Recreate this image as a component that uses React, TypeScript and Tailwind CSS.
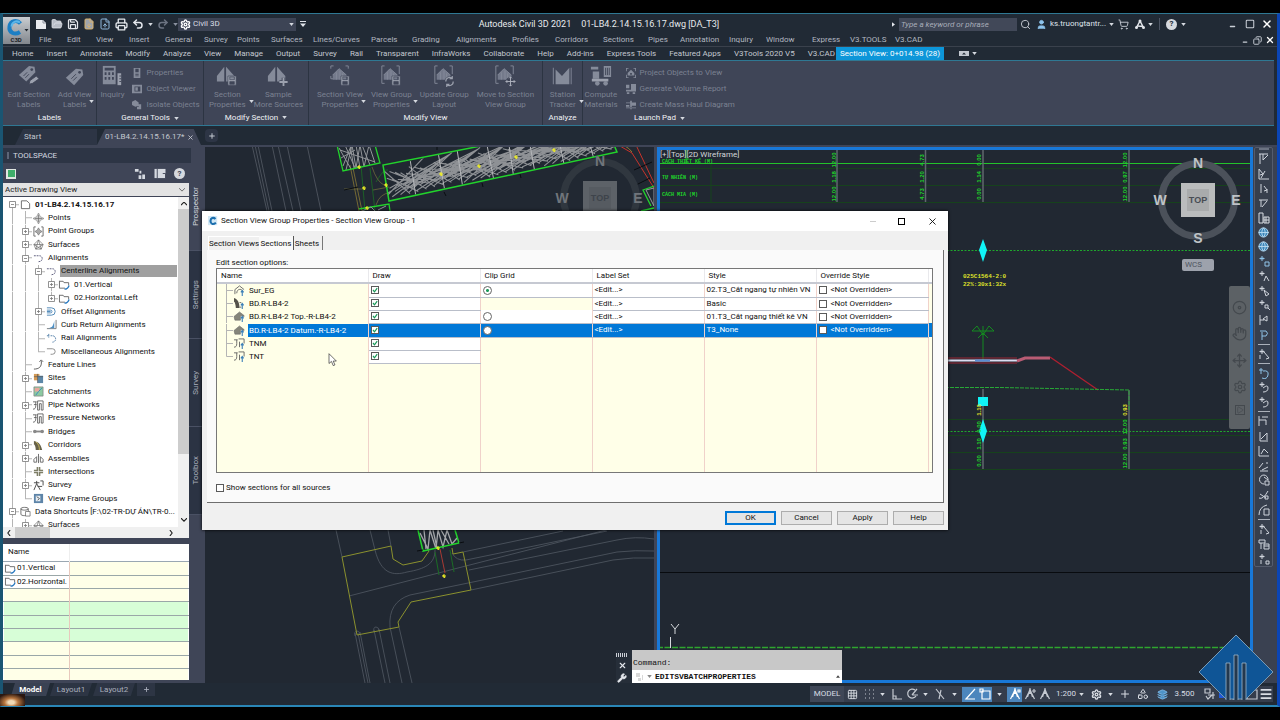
import React from "react";
import {
  FilePlus, FolderOpen, Save, FileDown, FileUp, Printer, Undo2, Redo2, Settings, Search, User, ShoppingCart,
  Wrench, X, Plus, Minus, Grid3x3, Menu, Layers, Shapes, Hand, Move, Disc, Play, Copy, Square, Globe,
} from "lucide-react";

const Caret = ({ className = "text-[#d5d9e0]" }: { className?: string }) => (
  <svg className={"h-[3px] w-[5px] shrink-0 " + className} viewBox="0 0 6 4"><path d="M0 0h6L3 4z" fill="currentColor" /></svg>
);

const menus = ["File", "Edit", "View", "Insert", "General", "Survey", "Points", "Surfaces", "Lines/Curves", "Parcels", "Grading", "Alignments", "Profiles", "Corridors", "Sections", "Pipes", "Annotation", "Inquiry", "Window", "Express", "V3.TOOLS", "V3.CAD"];
const tabs = ["Home", "Insert", "Annotate", "Modify", "Analyze", "View", "Manage", "Output", "Survey", "Rail", "Transparent", "InfraWorks", "Collaborate", "Help", "Add-ins", "Express Tools", "Featured Apps", "V3Tools 2020 V5", "V3.CAD"];

function TitleBar() {
  return (
    <header className="flex bg-[#212a35] text-[#c9ced6]">
      <button aria-label="Application menu" className="mt-[3px] flex h-[27px] w-[27px] shrink-0 items-center justify-center bg-gradient-to-b from-[#c9cdd1] to-[#82878d]">
        <svg viewBox="0 0 27 27" className="h-full w-full">
          <path d="M17.500 6.500C14 2.500 7.500 3.500 6.500 9.500c-1 6 5 9 10.500 5.500" fill="none" stroke="#1c7fc4" strokeWidth="4" />
          <path d="M17 5.500C13 3 9 5 8.500 9.500" fill="none" stroke="#5db7ea" strokeWidth="2" />
          <path d="M21.500 12h4l-2 2.500z" fill="#20262e" />
          <text x="7.500" y="25" fontSize="6" fontWeight="700" fill="#1b1f26" fontFamily="Roboto">C3D</text>
        </svg>
      </button>
      <div className="min-w-0 flex-1">
        <div className="flex h-5 items-center">
          <div className="flex items-center gap-1 pl-[5px] text-[#e4e7ec]">
            <button aria-label="New">
              <svg viewBox="0 0 12 12" className="h-3 w-3"><path d="M1 2h7l3 3v6H1z" fill="#e9ebef" /><path d="M8 2v3h3" fill="none" stroke="#8d939e" /></svg>
            </button>
            <button aria-label="Open"><FolderOpen size={12} fill="#b9bec7" strokeWidth={1.500} /></button>
            <button aria-label="Save"><Save size={12} strokeWidth={2.500} /></button>
            <button aria-label="Save as"><FileDown size={12} fill="#9fa4ac" className="text-[#d9b26c]" /></button>
            <button aria-label="Open from mobile"><FileUp size={12} className="text-[#8fb7dc]" /></button>
            <button aria-label="Plot"><Printer size={13} strokeWidth={2.500} /></button>
            <button aria-label="Undo"><Undo2 size={12} strokeWidth={3} /></button>
            <Caret />
            <button aria-label="Redo" className="text-[#6c7482]"><Redo2 size={12} strokeWidth={3} /></button>
            <Caret className="text-[#8a91a0]" />
          </div>
          <label className="flex h-[13px] w-[118px] items-center gap-[2px] bg-[#3d4455] px-[2px]">
            <Settings size={11} strokeWidth={3} className="text-white" />
            <select aria-label="Workspace" className="flex-1 appearance-none bg-transparent text-[8px] text-[#d9dde4] outline-none"><option>Civil 3D</option></select>
            <Caret />
          </label>
          <button aria-label="Customize" className="ml-1"><svg viewBox="0 0 6 6" className="h-[6px] w-[6px]"><path d="M0 0h6v1H0zM0 2.500h6L3 6z" fill="#dfe3e9" /></svg></button>
          <h1 className="flex flex-1 justify-center gap-[10px] text-[9px] text-[#e8eaee] max-sm:hidden"><span>Autodesk Civil 3D 2021</span><span>01-LB4.2.14.15.16.17.dwg [DA_T3]</span></h1>
          <svg viewBox="0 0 4 6" className="mr-1 h-[5px] w-[3px]"><path d="M0 0v6l4-3z" fill="#e4e7ec" /></svg>
          <input aria-label="Search" placeholder="Type a keyword or phrase" className="h-[13px] w-[118px] bg-[#414858] pl-[2px] text-[8px] italic outline-none placeholder:text-[#a8adb8]" />
          <button aria-label="Search" className="ml-[3px]"><Search size={11} /></button>
          <button className="ml-[5px] flex items-center gap-[3px] text-[8px] text-[#dfe3e9]"><User size={11} fill="#8ec5ee" className="text-[#8ec5ee]" />ks.truongtantr...<Caret /></button>
          <button aria-label="Store" className="ml-1"><ShoppingCart size={11} /></button>
          <button aria-label="Autodesk apps" className="ml-[6px] flex items-center gap-[3px]">
            <svg viewBox="0 0 10 10" className="h-[10px] w-[10px]"><path d="M1.500 8.500L5 2l3.500 6.500M3 7l5 .5" fill="none" stroke="#e4e7ec" strokeWidth="1.500" /><circle cx="5" cy="2" r="1.500" fill="#e4e7ec" /><circle cx="1.500" cy="8.500" r="1.500" fill="#e4e7ec" /><circle cx="8.500" cy="8.500" r="1.500" fill="#e4e7ec" /></svg>
            <Caret />
          </button>
          <i className="ml-[6px] h-3 w-px bg-[#4d5564]" />
          <button aria-label="Help" className="ml-[6px] flex items-center gap-1"><b className="flex h-[11px] w-[11px] items-center justify-center rounded-full bg-[#d6d9de] text-[8px] text-[#212a35]">?</b><Caret /></button>
          <button aria-label="Minimize" className="mt-1 ml-[43px]"><Minus size={7} strokeWidth={5} /></button>
          <button aria-label="Maximize" className="ml-[9px]"><Square size={10} strokeWidth={2.500} /></button>
          <button aria-label="Close" className="mr-1 ml-[6px] text-white"><X size={12} strokeWidth={3} /></button>
        </div>
        <nav className="flex h-3 items-center pl-[9px] text-[8px]">
          <div className="grid flex-1 grid-cols-[28px_29px_33px_36px_39px_33px_34px_42px_58px_41px_44px_56px_43px_48px_45px_32px_49px_37px_46px_38px_45px_40px] whitespace-nowrap text-[#b2b7c0]">
            {menus.map((m) => <a key={m} href="#menu">{m}</a>)}
          </div>
          <Minus size={6} strokeWidth={5} className="mt-1" />
          <Copy size={9} strokeWidth={2.500} className="ml-[5px] -scale-x-100" />
          <X size={10} strokeWidth={3} className="mr-[2px] ml-[3px] text-white" />
        </nav>
      </div>
    </header>
  );
}

const G = "#858b9a";
type GlyphName = "tag" | "tagview" | "inquiry" | "secprop" | "sample" | "view" | "group" | "update" | "move" | "station" | "compute";
function Glyph({ name }: { name: GlyphName }) {
  const brackets = <path d="M5 1H2v19h3M18 1h3v9" fill="none" stroke={G} strokeWidth="1" />;
  const dome = <><path d="M4 16v-5l7-7 8 7v5z" fill="#747a8b" /><path d="M4 11l7-7 8 7M8 8v8M12 6v10M15 9v7" fill="none" stroke={G} strokeWidth="1" /></>;
  const peaks = <><path d="M1 18v-6L9 2v16z" fill={G} /><path d="M11 18V2l9 10v6z" fill={G} /></>;
  const disk = <path d="M13 12h9v10h-9z M15 13v3h5v-3z M15 18v3h5v-3z" fill="#9ca1ae" fillRule="evenodd" stroke="#3f4557" strokeWidth=".7" />;
  return (
    <svg viewBox="0 0 24 24" className="h-[22px] w-[22px]">
      {name === "tag" && <><path d="M1 11L12 1l6 1 1 6-10 10z" fill={G} /><circle cx="15" cy="5" r="1.500" fill="#3f4557" /><path d="M6 12l4-4M8 14l4-4" stroke="#3f4557" /><path d="M12 21l1-4 7-5 3 3-7 5z" fill="#9ca1ae" stroke="#3f4557" /></>}
      {name === "tagview" && <><path d="M2 14L13 4l7 1 1 6-10 11z" fill={G} /><circle cx="17" cy="8" r="1.500" fill="#3f4557" /><path d="M8 15l5-5M10 17l4-4" stroke="#3f4557" /></>}
      {name === "inquiry" && <><path d="M2 1h14v20H2z" fill={G} /><path d="M4 3h10v3H4zM4 8h2v3H4zM8 8h2v3H8zM12 8h2v3h-2zM4 13h2v3H4zM8 13h2v3H8zM12 13h2v3h-2z" fill="#3f4557" /><path d="M18 9h4v13h-4z" fill="#9ca1ae" /><path d="M20 12h2M20 15h2M20 18h2" stroke="#3f4557" /></>}
      {name === "secprop" && <>{peaks}{disk}</>}
      {name === "sample" && <>{peaks}<path d="M18 14v9M13.500 18.500h9" stroke="#3f4557" strokeWidth="4" /><path d="M18 14v9M13.500 18.500h9" stroke="#9ca1ae" strokeWidth="2" /></>}
      {name === "view" && <><path d="M5 1H2v3M18 1h3v3M2 12v3h3" fill="none" stroke={G} />{dome}{disk}</>}
      {name === "group" && <>{brackets}{dome}{disk}</>}
      {name === "update" && <>{brackets}{dome}<circle cx="18" cy="18" r="5.500" fill="#3f4557" /><path d="M14 18a4 4 0 017-3M22 18a4 4 0 01-7 3M21 12v3h-3M15 24v-3h3" fill="none" stroke="#9ca1ae" strokeWidth="1.300" /></>}
      {name === "move" && <>{brackets}{dome}<circle cx="18" cy="18" r="5" fill="#3f4557" /><path d="M18 13v10M13 18h10M16.500 14.500L18 13l1.500 1.500M16.500 21.500L18 23l1.500-1.500M14.500 16.500L13 18l1.500 1.500M21.500 16.500L23 18l-1.500 1.500" fill="none" stroke="#b0b4bf" /></>}
      {name === "station" && <><path d="M2 3h1v18H2zM5 21V5l7 7 8-9v18z" fill={G} /><path d="M22 3v18" stroke={G} /></>}
      {name === "compute" && <><path d="M1 2h8v3H1zM3 7h7v8H3zM15 1h8v12h-8z" fill={G} /><path d="M17 3v8M19 3v8M21 3v8" stroke="#3f4557" /><path d="M2 15h18v3H2z" fill="#9ca1ae" /><circle cx="8" cy="20" r="2.500" fill={G} /><circle cx="17" cy="20" r="2.500" fill={G} /></>}
    </svg>
  );
}

const smallArt: Record<string, string> = {
  props: "M2 0h8v12H2zM4 1v4h4V1zM4 7v1h4V7zM4 9v1h4V9z",
  viewer: "M0 1h12v10H0zM3 3v6h7V3zM4 4h3v4H4z",
  isolate: "M0 2l4-2 4 3v4L4 8 0 6zM8 5h3v6H6V8h2z",
  project: "M0 0h3v1H1v3H0zM9 0h3v4h-1V1H9zM0 8h1v3h2v1H0zM11 8h1v4H9v-1h2zM2 9V6l4-4 4 4v3zM5 6v2h2V6z",
  volume: "M0 1h4v4H0zM6 0h6v7H6zM0 7h12v2H0zM1 10h3v2H1zM8 10h3v2H8z",
  haul: "M0 3h5v1H0zM5 1h2v10H5zM7 3h5v4H7zM0 6h4v2H0zM0 9h12v1H0z",
};
function Big({ icon, a, b, caret }: { icon: GlyphName; a: string; b?: string; caret?: boolean }) {
  return (
    <button className="flex flex-col items-center">
      <Glyph name={icon} />
      <span className="mt-[3px] leading-[10px]">{a}</span>
      <span className="flex items-center gap-[3px] leading-[10px]">{b}{caret && <span className="-mt-2 -mr-2"><Caret /></span>}</span>
    </button>
  );
}
function Small({ icon, children }: { icon: string; children: React.ReactNode }) {
  return (
    <button className="flex h-4 items-center gap-1 whitespace-nowrap">
      <svg viewBox="0 0 12 12" className="h-[10px] w-[10px]"><path d={smallArt[icon]} fill={G} fillRule="evenodd" /></svg>{children}
    </button>
  );
}
function Panel({ title, className, caret, children }: { title: string; className: string; caret?: boolean; children: React.ReactNode }) {
  return (
    <section className={"flex shrink-0 flex-col border-r border-[#2c3442] " + className}>
      <div className="flex flex-1 items-start justify-center gap-2 pt-1 whitespace-nowrap">{children}</div>
      <h2 className="flex h-[13px] items-center justify-center gap-1 pb-[2px] text-[#f0f2f5]">{title}{caret && <Caret />}</h2>
    </section>
  );
}

function Ribbon() {
  return (
    <>
      <nav className="flex h-[14px] items-center gap-[13px] border-t border-[#3a414c] bg-[#212a35] pl-[9px] text-[8px] whitespace-nowrap text-[#c3c8d0]">
        {tabs.map((t, i) => <a key={t + i} href="#tab">{t}</a>)}
        <a href="#tab" className="-ml-[12px] flex h-full items-center bg-[#0d96d9] px-1 text-white">Section View: 0+014.98 (28)</a>
        <button aria-label="Ribbon display" className="ml-[2px] flex items-center gap-[3px]"><svg viewBox="0 0 10 5" className="h-[5px] w-[10px]"><path d="M0 0h10v5H0z" fill="#c3c8d0" /><path d="M3 3.500h4L5 1.500z" fill="#212a35" /></svg><Caret /></button>
      </nav>
      <div className="mr-[3px] flex h-[66px] border-y border-[#2f7893] bg-[#3f4557] text-[8px] text-[#7b8191]">
        <Panel title="Labels" className="w-[94px]"><Big icon="tag" a="Edit Section" b="Labels" /><Big icon="tagview" a="Add View" b="Labels" caret /></Panel>
        <Panel title="General Tools" caret className="w-[107px]">
          <Big icon="inquiry" a="Inquiry" />
          <div><Small icon="props">Properties</Small><Small icon="viewer">Object Viewer</Small><Small icon="isolate">Isolate Objects</Small></div>
        </Panel>
        <Panel title="Modify Section" caret className="w-[105px]"><Big icon="secprop" a="Section" b="Properties" caret /><Big icon="sample" a="Sample" b="More Sources" /></Panel>
        <Panel title="Modify View" className="w-[234px]"><Big icon="view" a="Section View" b="Properties" caret /><Big icon="group" a="View Group" b="Properties" caret /><Big icon="update" a="Update Group" b="Layout" /><Big icon="move" a="Move to Section" b="View Group" /></Panel>
        <Panel title="Analyze" className="w-[40px]"><Big icon="station" a="Station" b="Tracker" caret /></Panel>
        <Panel title="Launch Pad" caret className="w-[153px] border-r-0">
          <Big icon="compute" a="Compute" b="Materials" />
          <div><Small icon="project">Project Objects to View</Small><Small icon="volume">Generate Volume Report</Small><Small icon="haul">Create Mass Haul Diagram</Small></div>
        </Panel>
      </div>
    </>
  );
}

type Node = [level: number, toggle: "" | "+" | "-", icon: string, label: string, last?: boolean];
const nodes: Node[] = [
  [0, "-", "file", "01-LB4.2.14.15.16.17"], [1, "", "point", "Points"], [1, "+", "group", "Point Groups"], [1, "+", "surface", "Surfaces"],
  [1, "-", "align", "Alignments"], [2, "-", "align", "Centerline Alignments"], [3, "+", "folder", "01.Vertical"], [3, "+", "folder", "02.Horizontal.Left", true],
  [2, "+", "offset", "Offset Alignments"], [2, "", "curb", "Curb Return Alignments"], [2, "", "rail", "Rail Alignments"], [2, "", "misc", "Miscellaneous Alignments", true],
  [1, "", "feature", "Feature Lines"], [1, "+", "site", "Sites"], [1, "", "catch", "Catchments"], [1, "+", "pipe", "Pipe Networks"],
  [1, "", "pipe", "Pressure Networks"], [1, "", "bridge", "Bridges"], [1, "+", "corridor", "Corridors"], [1, "+", "assembly", "Assemblies"],
  [1, "", "inter", "Intersections"], [1, "+", "survey", "Survey"], [1, "", "frame", "View Frame Groups", true], [0, "-", "data", "Data Shortcuts [F:\\02-TR-DỰ ÁN\\TR-0..."], [1, "+", "surface", "Surfaces"],
];

function TreeIcon({ name }: { name: string }) {
  const s = { fill: "none", stroke: "#666", strokeWidth: 1 };
  const up = <path d="M9 12V6M7.500 8L9 6l1.500 2" fill="none" stroke="#3b7fb8" strokeWidth="1.200" />;
  const art: Record<string, React.ReactNode> = {
    file: <path d="M1.500 2h6l3 3v5.500h-9z" {...s} />,
    point: <><path d="M6 0l2 4 4 2-4 2-2 4-2-4-4-2 4-2z" fill="#ccc" stroke="#777" strokeWidth=".6" /><path d="M6 2v8M2 6h8" {...s} strokeWidth=".7" /></>,
    group: <><path d="M3 1H1v10h2M9 1h2v10H9" {...s} /><path d="M6 2l1.500 2.500L10 6 7.500 7.500 6 10 4.500 7.500 2 6l2.500-1.500z" fill="#aaa" stroke="#666" strokeWidth=".6" /></>,
    surface: <path d="M1 6l5-5 5 5-2 5H3zM6 1L3 11l8-5H1l8 5z" {...s} strokeWidth=".7" />,
    align: <><path d="M1 3h2M4 3h2M7 3a3 3 0 013 3.500c-.3 2-2 3-4 3" {...s} stroke="#557" strokeDasharray="2 .8" /></>,
    offset: <path d="M1 2h5a4 4 0 010 8H1M1 4.500h4a1.500 1.500 0 010 3H1M1 6h4" {...s} stroke="#4682b4" />,
    curb: <><path d="M1 10.500h10V1" {...s} stroke="#777" /><path d="M2 10c5 0 6-3 7-8v8z" fill="#4d8fc4" /></>,
    rail: <path d="M1 3h3M3 1v4M5 3h2a3 3 0 010 7" {...s} stroke="#4d7ba5" strokeDasharray="2 .8" />,
    misc: <path d="M1 3h6a3 3 0 010 6H5" {...s} stroke="#888" />,
    folder: <><path d="M.5 2.500h4l1 1.500h5v3M.5 2v8h6" {...s} stroke="#666" /><path d="M6 11c3 0 4-1 5-4" fill="none" stroke="#2b7bc0" strokeWidth="1.500" /></>,
    feature: <path d="M1 11c5 0 9-2 8-9M7 3l2-2 2 2" {...s} stroke="#555" />,
    site: <><path d="M1 1h6v7H1z" fill="#d49a55" /><path d="M5 3h6v8H5z" fill="#5c87a8" /><path d="M1 4h10M5 1v10" stroke="#555" strokeWidth=".7" /></>,
    catch: <><path d="M1 1h10v10H1z" fill="#8cc9a1" stroke="#777" strokeWidth=".7" /><path d="M2 2h5v4H2z" fill="#e9a79c" /><path d="M3 10l3-4 4-4" stroke="#3d84bd" fill="none" /></>,
    pipe: <path d="M0 2h4M3 2v4c0 3-1 4-3 4M5 1h6v10H9V4H7v7H5zM1 5h3" {...s} stroke="#555" strokeWidth=".9" />,
    section: <><path d="M0 2h4M3 2v4c0 3-1 4-3 4M5 1h6v5M6 4v6" {...s} stroke="#555" strokeWidth=".9" />{up}</>,
    bridge: <><path d="M1 5h10v2H1z" fill="#888" /><circle cx="2" cy="6" r="2" fill="#888" /><circle cx="10" cy="6" r="2" fill="#888" /></>,
    corridor: <><path d="M1 1c6 1 8 5 9 10H3C3 8 2 5 1 5z" fill="#67624a" /><path d="M3 2c3 2 4 5 4 9" fill="none" stroke="#e2cf63" strokeWidth=".8" /></>,
    csec: <><path d="M0 0c4 1 6 5 6 11H2C2 8 1 4 0 4z" fill="#55534a" /><path d="M6 5h2M6 10h2" stroke="#666" />{up}</>,
    ssec: <><path d="M1 10V5l5-4 5 4M3 9c0-5 5-5 6-3" {...s} />{up}</>,
    topsec: <><path d="M0 6l6-5 5 4v1L7 5v5H1z" fill="#85857a" stroke="#666" strokeWidth=".6" />{up}</>,
    assembly: <path d="M1 10V7l3-3v6zM8 10V4l3 3v3zM6 1v10" {...s} />,
    inter: <><path d="M4 1h4v10H4zM1 4h10v4H1z" fill="#7e7e66" /><path d="M6 1v10M1 6h10" stroke="#fff" strokeWidth=".7" /></>,
    survey: <path d="M1 3h6M4 1v3l-3 7M4 4l4 7M8 1h3v5M5 7h5" {...s} stroke="#444" />,
    frame: <><path d="M1 1h10v10H1z" fill="#5d84a8" /><path d="M3 3h5v6H3z" fill="#e6eef5" /><path d="M4 4l3 2-2 2" stroke="#333" fill="none" strokeWidth=".8" /></>,
    data: <><path d="M1 3c0-2 8-2 8 0v6c0 2-8 2-8 0zM1 3c0 2 8 2 8 0" {...s} /><path d="M6 6h5v5H6z" fill="#fff" stroke="#666" strokeWidth=".8" /></>,
  };
  return <svg viewBox="0 0 12 12" className="h-[11px] w-[13px] shrink-0">{art[name]}</svg>;
}
function Guide({ kind }: { kind: "line" | "branch" | "end" | "start" }) {
  const d = { line: "M6.500 0v13", branch: "M6.500 0v13M6.500 6.500H13", end: "M6.500 0v6.500H13", start: "M6.500 13V6.500H13" }[kind];
  return <svg viewBox="0 0 13 13" preserveAspectRatio="none" className="h-full w-[13px] shrink-0"><path d={d} stroke="#b5b5b5" fill="none" /></svg>;
}

function Toolspace() {
  return (
    <aside className="flex w-[202px] shrink-0 flex-col bg-[#3f4557]">
      <h2 className="mt-px mr-[14px] flex h-[15px] items-center gap-1 bg-[#2d3545] pl-1 text-[8px] text-[#d5d9e0]"><i className="h-[7px] w-[2px] bg-[#5d6577]" />TOOLSPACE</h2>
      <div className="flex flex-1">
        <div className="flex w-[186px] flex-col">
          <div className="flex h-5 items-center gap-[5px] pt-px pr-1 pl-[3px] text-[#d5d9e0]">
            <i className="mr-auto flex h-[10px] w-[10px] items-center justify-center bg-[#dfe6e1]"><i className="h-[7px] w-[7px] bg-[#3fae6a]" /></i>
            <svg viewBox="0 0 12 12" className="h-[11px] w-[11px]"><path d="M1 1h4v3H1zM6 3h2v3H6zM5 8h3v4H5zM9 7h3v5H9z" fill="#d5d9e0" /></svg>
            <svg viewBox="0 0 12 12" className="ml-1 h-[11px] w-[12px]"><path d="M0 1h12v10H0z" fill="#d5d9e0" /><path d="M3 1v10M9 6h3v5" stroke="#3f4557" fill="none" /></svg>
            <b className="ml-[3px] flex h-[11px] w-[11px] items-center justify-center rounded-full bg-[#d6d9de] text-[8px] text-[#3f4557]">?</b>
          </div>
          <label className="flex h-[13px] items-center bg-[#e3e3e3] px-[2px] text-[8px] text-[#222]">
            <select aria-label="View" className="flex-1 appearance-none bg-transparent outline-none"><option>Active Drawing View</option></select>
            <svg viewBox="0 0 8 5" className="mr-[2px] h-1 w-[6px]"><path d="M0 0l4 4 4-4" fill="none" stroke="#444" /></svg>
          </label>
          <div className="mt-px h-[330px] overflow-hidden bg-white">
            <div className="flex">
              <ul className="flex h-[335px] flex-1 flex-col pt-px pl-[3px] text-[8px] text-[#111]">
                {nodes.map(([level, toggle, icon, label, last], i) => (
                  <li key={i} className="flex min-h-0 flex-1 items-center whitespace-nowrap">
                    {Array.from({ length: level }, (_, k) => <Guide key={k} kind="line" />)}
                    <span className="grid h-full w-[13px] place-items-center [&>*]:[grid-area:1/1]">
                      <Guide kind={last ? "end" : i === 0 ? "start" : "branch"} />
                      {toggle && <svg viewBox="0 0 7 7" className="h-[7px] w-[7px]"><path d={toggle === "+" ? "M.5.5h6v6h-6zM2 3.500h3M3.500 2v3" : "M.5.5h6v6h-6zM2 3.500h3"} fill="#fff" stroke="#777" strokeWidth=".8" /></svg>}
                    </span>
                    <TreeIcon name={icon} />
                    <span className={"ml-[2px] pl-px " + (i === 0 ? "font-bold" : label.startsWith("Centerline") ? "w-[117px] bg-[#a0a0a0] leading-[12px]" : "")}>{label}</span>
                  </li>
                ))}
              </ul>
              <div className="flex h-[330px] w-[11px] flex-col items-center bg-[#f0f0f0] py-[5px]">
                <svg viewBox="0 0 8 5" className="h-1 w-[6px]"><path d="M0 4l4-4 4 4" fill="none" stroke="#222" strokeWidth="1.500" /></svg>
                <i className="mt-[3px] h-[245px] w-full bg-[#cdcdcd]" />
                <svg viewBox="0 0 8 5" className="mt-auto h-1 w-[6px]"><path d="M0 0l4 4 4-4" fill="none" stroke="#222" strokeWidth="1.500" /></svg>
              </div>
            </div>
          </div>
          <div className="flex h-[11px] items-center bg-[#f0f0f0] px-1 text-[#222]">
            <svg viewBox="0 0 5 8" className="h-[6px] w-1"><path d="M4 0L1 4l3 4" fill="none" stroke="#222" strokeWidth="1.500" /></svg>
            <i className="ml-1 h-full w-[35px] bg-[#cdcdcd]" />
            <svg viewBox="0 0 5 8" className="mr-3 ml-auto h-[6px] w-1"><path d="M1 0l3 4-3 4" fill="none" stroke="#222" strokeWidth="1.500" /></svg>
          </div>
          <table className="mt-[6px] w-full border-x border-white bg-[#ffffe8] text-left text-[8px] text-[#111]">
            <thead><tr className="h-[17px] border-b border-[#9aa7b2] bg-white"><th className="w-[66px] border-r border-[#eee] pl-1 font-normal">Name</th><th /></tr></thead>
            <tbody>
              {["01.Vertical", "02.Horizontal.", "", "g", "g", "g", "", "", ""].map((r, i) => (
                <tr key={i} className={"h-[13px] border-b border-[#9aa7a8] last:h-[12px] last:border-0 nth-[3n+1]:h-[14px] " + (r === "g" ? "bg-[#d7fed7]" : "")}>
                  <td className={"border-r border-[#e8c9bd] p-0 " + (r.length > 1 ? "bg-white" : "")}>{r.length > 1 && <span className="flex items-center"><TreeIcon name="folder" />{r}</span>}</td><td />
                </tr>
              ))}
            </tbody>
          </table>
        </div>
        <div className="flex w-[14px] flex-col text-[8px] text-[#a9aebb]">
          {["Prospector", "Settings", "Survey", "Toolbox"].map((t, i) => (
            <button key={t} className={"flex h-[88px] items-center justify-center border-b border-[#4a5164] " + (i ? "bg-[#2b3343]" : "text-[#d0d4dc]")}><span className="rotate-180 [writing-mode:vertical-rl]">{t}</span></button>
          ))}
        </div>
      </div>
    </aside>
  );
}

const Star = ({ x, y }: { x: number; y: number }) => <path d={`M${x - 2} ${y}h4M${x} ${y - 2}v4M${x - 1} ${y - 1}l2 3`} stroke="#f2f224" strokeWidth="1" />;

function Cube({ x, y, dim }: { x: number; y: number; dim?: boolean }) {
  return (
    <g fontFamily="Liberation Sans, sans-serif" textAnchor="middle" fontWeight="700">
      <circle cx={x} cy={y} r="36.500" fill="none" stroke={dim ? "#30373f" : "#4b515a"} strokeWidth="7" />
      <rect x={x - 17} y={y - 17} width="34" height="34" fill={dim ? "#5d6268" : "#babcbd"} />
      <rect x={x - 11} y={y - 11} width="22" height="22" fill={dim ? "#565b61" : "#a9abac"} />
      <text x={x} y={y + 3} fontSize="9" fill={dim ? "#3e444b" : "#484d54"}>TOP</text>
      <g fontSize="14" fill={dim ? "#70757b" : "#bfc3c7"}><text x={x} y={y - 32}>N</text><text x={x} y={y + 43}>S</text><text x={x - 38} y={y + 5}>W</text><text x={x + 38} y={y + 5}>E</text></g>
    </g>
  );
}

function hatchStrip() {
  const n = 84;
  let d = "";
  for (let i = 0; i < n; i++) {
    const u = ((i * 29) % n) / n, v = ((i * 47) % n) / n;
    const x = 384 + (i / n) * 232, x2 = x + 40 + u * 30;
    const top = (q: number) => 165 - (q - 384) * 0.195, low = (q: number) => 199 - (q - 384) * 0.205;
    d += `M${x} ${low(x) - u * 14}L${x2} ${top(x2) + v * 16}M${x} ${top(x) + 6 + v * 14}L${x + 26} ${low(x + 26) - u * 16}`;
  }
  return d;
}

function PlanView() {
  return (
    <div className="relative w-[449px] shrink-0 overflow-hidden bg-[#212832]">
      <svg className="absolute inset-0 h-full w-full" fill="none">
        <g transform="translate(-205 -147)">
          <path d="M252 145l15 66M255 145l14 66M258 145l14 66M272 145l14 66M278 145l15 66M287 145l14 66M307 145l14 66" stroke="#555c66" strokeWidth=".8" />
          <path d="M350 165l9 46M353 168l9 43" stroke="#8a7a35" strokeWidth=".8" /><path d="M361 165l4 46M370 168l5 43M376 182q8-14 12-12" stroke="#1b6d25" strokeWidth=".8" />
          <path d="M344 189h20M373 190l16-3M372 167q5 15 12 18M376 205q4-12 14-12" stroke="#6f6a3b" strokeWidth=".8" />
          <path d="M340 150l35 12M346 170l6-25 4 23 4-23 4 22 5-22 6 18M339 148l12 21M345 145l10 23M362 145l8 20M350 145l4 23M356 145l4 23M341 158l14-8M343 166l8-20" stroke="#93969a" />
          <path d="M337 145l6 26 37-8-5-18" stroke="#22d32c" strokeWidth="1.300" />
          <clipPath id="strip"><path d="M383 167L486 145H614l3 7L389 200z" /></clipPath>
          <g clipPath="url(#strip)">
            <path d={hatchStrip()} stroke="#8e9195" strokeWidth="1.100" />
            <path d="M410 159l6 38M438 152l7 40M457 149l6 40M487 145l7 36M509 145l5 34M530 145l5 28M560 145l5 24M590 145l5 18" stroke="#b5b7ba" />
          </g>
          <path d="M486 145L383 165l6 36L617 152l-3-7" stroke="#22d32c" strokeWidth="1.500" />
          <path d="M359 209l30-5 1 7" stroke="#22d32c" strokeWidth="1.300" />
          <path d="M362 211l9-4 4 4M378 210l8-4" stroke="#909398" />
          <path d="M344 190l14-3M437 150v-4M444 192l2 4M482 183l1 4M520 174l1 4" stroke="#090c10" />
          <path d="M620 146l12 7 22 35M636 145l18 38" stroke="#c8342b" /><path d="M617 145q9-1 15 7" stroke="#8a7a35" />
          <path d="M634 170l18-8M636 185l14-7" stroke="#090c10" />
          <path d="M654 186l-11 4 8 16M641 211l13-3" stroke="#22d32c" strokeWidth="1.300" /><path d="M654 188v18l-8-16z" stroke="#96989c" />
          <Star x={359} y={167} /><Star x={364} y={188} /><Star x={386} y={185} /><Star x={441} y={174} /><Star x={479} y={166} /><Star x={516} y={157} /><Star x={554} y={150} /><Star x={367} y={208} />
          <path d="M336 530l6 27M370 530l5 20c6 24 18 26 32 22 18-3 28-8 28-22M388 530l3 16M349 596l257-66M463 552l100-21M452 553q4 8 14 7l141-29M469 570l148-30q18-4 37-1M410 595l63-13 144-30q18-2 37-1M471 590l142-30q20-3 41-2M410 595q-22 7-20 32l12 56M399 627l13 56M355 633l10 50M358 633l10 50M360 632l10 51M374 630l11 53M379 629l11 54" stroke="#525963" strokeWidth=".8" />
          <path d="M355 636q-1-5 2-5t3 4M374 632q-1-5 2-5t3 4" stroke="#525963" strokeWidth=".8" />
          <path d="M429 551l-7 10-19 4-10-6-2-13-49 11 15 78 42-8-1-5 13-20 60-12-8-38-10 2-1-6" stroke="#8b912e" />
          <path d="M435 552l4 23M450 550l4 22" stroke="#1b6d25" /><path d="M440 549l5 24" stroke="#a93a32" />
          <path d="M420 533l8 16 2-19 6 19 2-19 5 17 4-17 5 14 5-6M424 530l2 19M433 530l4 18M441 530l8 14" stroke="#a4a6aa" strokeWidth="1.300" />
          <path d="M418 530l5 21 36-8-4-13" stroke="#22d32c" strokeWidth="1.500" /><path d="M417 551l6-1M459 543l5-1" stroke="#090c10" />
          <Star x={438} y={548} /><Star x={444} y={576} />
          <Cube x={600} y={198} dim />
        </g>
      </svg>
    </div>
  );
}

const Vert = ({ x, y, c = "#1fd42a", children }: { x: number; y: number; c?: string; children: string }) => (
  <text transform={`translate(${x + 2} ${y}) rotate(-90)`} textAnchor="middle" fill={c}>{children}</text>
);
function SectionView() {
  const stations: [number, string, string][] = [[834, "12.00", "1.18"], [922, "4.73", "1.20"], [979, "0.00", "1.14"], [1125, "12.00", "0.97"]];
  return (
    <div className="relative min-w-0 flex-1 overflow-hidden border-[3px] border-[#1878d8] bg-[#212832]">
      <svg className="absolute inset-0 h-full w-full" fill="none">
        <g transform="translate(-660 -150)" fontFamily="Liberation Sans, sans-serif" fontSize="6" fontWeight="700">
          <path d="M657 168.500h600M657 185.500h600M657 202.500h600M711 163v39M657 419.500h600M657 435.500h600M657 452.500h600M657 469.500h600" stroke="#16421c" />
          <path d="M657 163.500h600M686 148v15" stroke="#23c42b" />
          <path d="M837 148v54M925.500 148v54M983 148v54M1129 148v54M983 389v80M1129 390v79" stroke="#60676e" strokeWidth="1.500" />
          {stations.map(([x, a, b]) => <g key={x}><Vert x={x} y={160}>{a}</Vert><Vert x={x} y={177}>{b}</Vert><Vert x={x} y={194}>{a}</Vert></g>)}
          <g fill="#1fd42a" fontFamily="Liberation Mono, monospace" fontSize="5"><text x="662" y="163">CÁCH THIẾT KẾ (M)</text><text x="662" y="179">TỰ NHIÊN (M)</text><text x="662" y="196">CÁCH MIA (M)</text></g>
          <text x="660" y="157" fontFamily="Roboto, sans-serif" fontSize="8" fontWeight="400" fill="#d3d7dc">[+][Top][2D Wireframe]</text>
          <path d="M940 250.500h320M940 431.500h320" stroke="#1fa82c" strokeDasharray="2 1.500" />
          <path d="M983 239l4 11-4 12-4-12zM983 419l4 12-4 12-4-12zM978 397h10v9h-10z" fill="#10f4f6" />
          <g fill="#dfe02a" fontFamily="Liberation Mono, monospace"><text x="963" y="278">025C1564-2:0</text><text x="963" y="286">22%:30x1:32x</text></g>
          <path d="M983 326v34M972 331l5-5 6 9 6-9 5 5h-22M978 338l5-5 5 5" stroke="#148a20" />
          <path d="M948 358h69M948 363h69" stroke="#9c2635" /><path d="M948 360.500h69" stroke="#dbdcf0" strokeWidth="2" /><path d="M1017 361l8-3h25" stroke="#b95c74" strokeWidth="3" /><path d="M975 360.500h15" stroke="#5a8bd2" strokeWidth="2" />
          <path d="M1050 357l48 33" stroke="#b01f30" strokeWidth="1.300" />
          <path d="M940 387.500l60 0 129 2.500v20" stroke="#28a836" strokeDasharray="4 1" />
          <path d="M1230 402.500h30M657 572.500h600" stroke="#080b0f" />
          <Vert x={979} y={410} c="#e5e52a">1.10</Vert><Vert x={979} y={427}>0.00</Vert><Vert x={979} y={444}>1.10</Vert><Vert x={979} y={461}>0.00</Vert>
          <Vert x={1125} y={410} c="#e5e52a">0.93</Vert><Vert x={1125} y={427}>12.00</Vert><Vert x={1125} y={444}>0.93</Vert><Vert x={1125} y={461}>12.00</Vert>
          <path d="M657 647.500h600" stroke="#2fa52f" strokeDasharray="6 1.500" strokeWidth="1.500" />
          <path d="M671 624l4 5 4-5M675 629v5M670.500 637v11" stroke="#d6d9dd" />
          <Cube x={1198} y={200} />
        </g>
      </svg>
      <div className="absolute top-[109px] right-[36px] h-[12px] w-8 rounded-[2px] bg-[#9da2ac] pl-[3px] text-[8px] leading-[11px] text-[#4f5560]">WCS</div>
      <div className="absolute top-[136px] right-0 flex h-[143px] w-[21px] flex-col items-center justify-around rounded-[2px] bg-[#5c6165] py-2 text-[#44494e]">
        <Disc size={15} /><Hand size={15} /><Move size={15} /><Settings size={14} /><span className="border border-[#44494e]"><Play size={8} /></span>
      </div>
    </div>
  );
}

const tool = "#cfd4dc";
const toolArt = [
  "M1 1h9M2 1v10M5 1v6l5-5", "M1 1l4 5-3 1M1 11h10M7 3l-4 7M1 1v10", "M3 1v9M6 3l3 4-3 1M9 10V6", "M1 3h9M3 3v7M9 4l-5 6",
];
function Palette() {
  const star = "M4 1v5M1.500 3.500h5M3 2.500l2 2M5 2.500l-2 2";
  const icons: [string, string?][] = [
    ...toolArt.map((d) => [d] as [string]),
    ["M1 1h4v10H1zM6 5h5v6H6zM8 5v6M6 8h5", "#d9dde3"], ["globe"], ["globe"], [star + "M7 7h4v4H7z", "#8fc3e8"], [star + "M6 11l2-5 3 5"], [star + "M6 5l5 4-3 2z"], [star + "M7 6h3v3H7zM10 9l2 2"], ["M2 1v10M2 6h4M5 5l4-3v5z"], ["M2 2h6q3 2 0 5H4M4 3v8", "#8fc3e8"], ["bar"],
    [star + "M6 4l5 6-3 1M2 7v4"], ["bar"], ["M3 1v6M1 3h4M5 4q6-1 5 4T4 11", "#8fc3e8"], [star + "M5 7q5-4 5 0t-5 4"], [star + "M5 7q5-4 5 0t-5 4"], ["bar"],
    ["M1 1v10M1 5h7v5M4 2h6", ""], ["M2 2v9h8M3 9l6-6v7"], ["M1 1v10h10M3 9l3-5 4 4"], ["M1 8l4-5M4 10l6-3M2 11h8M9 2v2"], ["M6 1a4.500 4.500 0 100 9M6 1a4.500 4.500 0 014 5L6 3M7 7h4v4H7z"], ["M1 9q4 2 9-7M2 5l6 4M7 7h3v3H7z"], ["M1 11Q1 3 9 1M6 5h5v6H6z"], ["bar"],
    [star + "M6 4l5 6-3 1M3 7v4"], ["M1 2h6v3H1zM3 5v6M6 6h5v5H6zM6 8h5"], [star + "M3 7v4M8 8h3v3H8z"],
  ];
  return (
    <aside className="flex w-6 shrink-0 flex-col bg-[#3a4151] pr-[4px] pl-px">
      <div className="flex h-[420px] flex-col items-center justify-between rounded-[2px] border border-[#555c6c] bg-[#373f4d] pb-px">
        <i className="h-[2px] w-[10px] bg-[#6c7382]" />
        {icons.map(([d, c], i) =>
          d === "bar" ? <i key={i} className="h-px w-3 bg-[#aab0ba]" /> :
          d === "globe" ? <Globe key={i} size={11} fill="#3c85b8" className="text-[#b9dcf2]" /> :
          <button key={i} aria-label={"Tool " + (i + 1)}><svg viewBox="0 0 12 12" className="h-[12px] w-[12px]"><path d={d} fill="none" stroke={c || tool} strokeWidth="1" /></svg></button>
        )}
      </div>
    </aside>
  );
}

function Check({ checked, label, id }: { checked?: boolean; label: string; id?: string }) {
  return (
    <span className="inline-grid h-2 w-2 place-items-center align-middle [&>*]:[grid-area:1/1]">
      <input type="checkbox" id={id} defaultChecked={checked} aria-label={label} className="h-2 w-2 appearance-none border border-[#5a5a5a] bg-white" />
      {checked && <svg viewBox="0 0 8 8" className="pointer-events-none h-2 w-2"><path d="M2 4l1.500 1.800L6.200 2.200" fill="none" stroke="#1b9a5a" strokeWidth="1.200" /></svg>}
    </span>
  );
}

type Row = { icon: string; name: string; clip?: "on" | "off"; style?: string; sel?: boolean };
const rows: Row[] = [
  { icon: "ssec", name: "Sur_EG", clip: "on", style: "02.T3_Cắt ngang tự nhiên VN" },
  { icon: "csec", name: "BD.R-LB4-2", style: "Basic" },
  { icon: "topsec", name: "BD.R-LB4-2 Top.-R-LB4-2", clip: "off", style: "01.T3_Cắt ngang thiết kê VN" },
  { icon: "topsec", name: "BD.R-LB4-2 Datum.-R-LB4-2", clip: "off", style: "T3_None", sel: true },
  { icon: "section", name: "TNM" },
  { icon: "section", name: "TNT" },
];

function Dialog() {
  const btn = "h-[14px] w-[51px] bg-[#e5e5e5] ";
  const plain = btn + "border border-[#adadad] leading-[12px]";
  return (
    <div role="dialog" aria-label="Section View Group Properties" className="absolute top-[197px] left-[199px] flex h-[319px] w-[746px] flex-col bg-[#f0f0f0] text-[8px] text-[#111] shadow-[0_0_3px_#000]">
      <div className="flex h-5 items-center bg-white pr-[10px] pl-[6px]">
        <svg viewBox="0 0 12 12" className="h-[10px] w-[10px]"><path d="M0 0h11v11H0z" fill="#d3e8f5" /><path d="M9 3.500C6.500 1 3 2.500 3 6s3 5 6.500 2" fill="none" stroke="#1c6fae" strokeWidth="2.500" /></svg>
        <h2 className="ml-[3px] flex-1">Section View Group Properties - Section View Group - 1</h2>
        <button aria-label="Minimize"><i className="block h-px w-[6px] bg-[#ccc]" /></button>
        <button aria-label="Maximize" className="ml-[22px] h-[7px] w-[7px] border border-black" />
        <button aria-label="Close" className="ml-[22px]"><X size={11} strokeWidth={2} /></button>
      </div>
      <div className="mt-[5px] flex h-[14px] items-center px-[6px] leading-[13px] whitespace-nowrap">
        <button className="flex h-full w-[51px] items-center justify-center border-t border-l border-white">Section Views</button>
        <button className="h-full w-[35px] border-r border-[#555] bg-[#fafafa]">Sections</button>
        <button className="h-full w-[29px] border-r border-[#777] pr-[2px]">Sheets</button>
      </div>
      <div className="mr-1 ml-[5px] h-[253px] border-r border-b border-[#6e6e6e] bg-[#fafafa] px-[9px]">
        <p className="h-[18px] pt-2 leading-[10px]">Edit section options:</p>
        <div className="h-[205px] w-[717px] border border-[#777] bg-[#ffffe8]">
          <table className="h-full w-full table-fixed border-collapse text-left whitespace-nowrap">
            <colgroup><col className="w-[151px]" /><col className="w-[112px]" /><col className="w-[112px]" /><col className="w-[112px]" /><col className="w-[112px]" /><col className="w-[112px]" /><col /></colgroup>
            <thead><tr className="h-[14px] border-b-2 border-[#c6c9d2] bg-white">{["Name", "Draw", "Clip Grid", "Label Set", "Style", "Override Style", ""].map((h) => <th key={h} className="border-r border-[#e9e9ec] p-0 pl-1 font-normal last:border-0">{h}</th>)}</tr></thead>
            <tbody>
              {rows.map((r) => {
                const cell = "border-r border-r-[#f0d2ca] border-b border-b-[#b9bec9] p-0 pl-[2px] leading-none " + (r.sel ? "bg-[#0078d7] text-white" : "bg-white");
                const none = "border-r border-r-[#f0d2ca] p-0";
                return (
                  <tr key={r.name} className="h-[13px] nth-[3n+1]:h-[14px]">
                    <td className="border-r border-r-[#f0d2ca] p-0">
                      <span className="flex h-[13px] items-center pl-[3px]"><Guide kind={r.name === "TNT" ? "end" : "branch"} /><TreeIcon name={r.icon} /><span className={"ml-[2px] flex-1 pl-px leading-[13px] " + (r.sel ? "bg-[#0078d7] text-white" : "")}>{r.name}</span></span>
                    </td>
                    <td className={cell}><Check checked label={"Draw " + r.name} /></td>
                    <td className={r.clip ? cell : none}>{r.clip && <input type="radio" name="clip" aria-label={"Clip " + r.name} defaultChecked={r.clip === "on"} className="block h-[9px] w-[9px] appearance-none rounded-full border border-[#666] bg-white checked:bg-[radial-gradient(circle,#1b9a5a_1px,white_2px)]" />}</td>
                    <td className={r.style ? cell : none}>{r.style && "<Edit...>"}</td>
                    <td className={r.style ? cell : none}>{r.style}</td>
                    <td className={r.style ? cell : none}>{r.style && <span className="flex items-center gap-1 pr-1"><Check label={"Override " + r.name} />{"<Not Overridden>"}</span>}</td>
                    <td className={"p-0 " + (r.sel ? "bg-[#0078d7]" : "")} />
                  </tr>
                );
              })}
              <tr>{[0, 1, 2, 3, 4, 5, 6].map((i) => <td key={i} className="border-r border-r-[#f0d2ca] p-0 last:border-0" />)}</tr>
            </tbody>
          </table>
        </div>
        <label htmlFor="all-sources" className="mt-[11px] flex items-center gap-[2px]"><Check id="all-sources" label="Show sections for all sources" />Show sections for all sources</label>
      </div>
      <div className="mt-2 flex justify-end gap-[5px] pr-1">
        <button className={btn + "border-2 border-[#0078d7] leading-[10px]"}>OK</button><button className={plain}>Cancel</button><button className={plain}>Apply</button><button className={plain}>Help</button>
      </div>
      <svg viewBox="0 0 12 20" className="absolute top-[142px] left-[126px] h-[14px] w-[9px]"><path d="M1 1v14l3.500-3 2.500 6 2.500-1-2.500-5.500h4.500z" fill="#fff" stroke="#333" /></svg>
    </div>
  );
}

function CommandLine() {
  return (
    <div className="absolute bottom-[22px] left-[613px] flex h-[33px] w-[226px] font-[Liberation_Mono,monospace] text-[8px]">
      <div className="flex w-4 flex-col items-center justify-between bg-[#262e39] pt-[3px] pr-1 text-[#e4e7ec]">
        <i className="h-1 w-3 bg-[repeating-linear-gradient(90deg,#cdd1d8_0_1px,transparent_1px_2px)]" /><X size={9} strokeWidth={3} /><Wrench size={10} fill="#e4e7ec" />
      </div>
      <div className="flex flex-1 flex-col">
        <div className="flex h-5 items-end bg-[#c8c8c8] pb-[3px] pl-[1px] text-[#111]">Command:</div>
        <label className="flex h-[13px] items-center gap-[3px] bg-white pr-[2px] pl-1 font-bold text-[#111]">
          <svg viewBox="0 0 8 8" className="h-2 w-2"><path d="M0 0h4v4H0zM2 5h3v3H2zM6 2h1v5H6z" fill="#d8d8d8" /></svg><Caret className="text-[#888]" />
          <input aria-label="Command" defaultValue="EDITSVBATCHPROPERTIES" className="min-w-0 flex-1 outline-none" />
          <svg viewBox="0 0 6 4" className="h-[3px] w-1"><path d="M0 4h6L3 0z" fill="#444" /></svg>
        </label>
      </div>
    </div>
  );
}

function StatusToggle({ d, on, label }: { d: string; on?: boolean; label: string }) {
  return (
    <button aria-label={label} className={"flex h-[15px] w-[15px] items-center justify-center " + (on ? "bg-[#4c86bd]" : "")}>
      <svg viewBox="0 0 12 12" className="h-3 w-3"><path d={d} fill="none" stroke={on ? "#fff" : "#c3c8d0"} strokeWidth="1.200" /></svg>
    </button>
  );
}
function StatusBar() {
  const person = "M6 0v6M5 4L1.500 11M7 4l3.500 7M6 1L3.500 9M6 1l2.500 8";
  return (
    <footer className="flex h-[22px] items-center bg-[#212a35] pr-1 text-[8px] text-[#d9dde4]">
      <nav className="flex h-[13px] items-stretch self-start pl-2 text-[#a9aebb]">
        <button className="w-[39px] bg-[#3a4253] font-bold text-white [clip-path:polygon(10%_0,100%_0,90%_100%,0_100%)]">Model</button>
        <button className="w-[42px] bg-[#2d3544] [clip-path:polygon(10%_0,100%_0,90%_100%,0_100%)]">Layout1</button><button className="ml-px w-[42px] bg-[#2d3544] [clip-path:polygon(10%_0,100%_0,90%_100%,0_100%)]">Layout2</button>
        <button aria-label="New layout" className="ml-[2px] flex w-[18px] items-center justify-center bg-[#2d3544]"><Plus size={7} strokeWidth={3} /></button>
      </nav>
      <div className="ml-auto flex h-4 items-center bg-[#353d4c]">
        <button className="h-full w-[34px] bg-[#3f4757]">MODEL</button>
        <span className="flex w-[17px] justify-center"><Grid3x3 size={11} /></span>
        <StatusToggle label="Snap" d="M2 2h1M6 2h1M10 2h1M2 6h1M6 6h1M10 6h1M2 10h1M6 10h1M10 10h1" /><Caret className="mx-1" /><StatusToggle label="Ortho" d="M2 1v10h9M2 8h3v3" /><StatusToggle label="Polar" d="M9 2a4.500 4.500 0 101 6M6 7l5-6M6 7h6" /><Caret className="mx-1" /><StatusToggle label="Isodraft" d="M2 1l8 10M5 11l2-9" /><Caret className="mx-[5px]" />
        <StatusToggle label="Snap tracking" on d="M11 1L2 11h9" /><StatusToggle label="Object snap" on d="M3 3h8v8H3zM1 1h3v3H1z" /><Caret className="mx-[5px]" /><StatusToggle label="Annotation visibility" on d={person + "M9 2h2v2H9z"} /><StatusToggle label="Auto scale" d={person + "M10 1v4M8 3h4"} /><StatusToggle label="Annotation scale" d={person} />
        <button className="mx-1 flex items-center gap-[3px]">1:200<Caret /></button><span className="flex w-4 justify-center"><Settings size={11} strokeWidth={3} /></span><Caret className="mx-1" /><span className="flex w-4 justify-center"><Plus size={12} /></span><span className="flex w-5 justify-center"><Shapes size={12} /></span><span className="flex w-[18px] justify-center text-[#7db8e6]"><Layers size={11} fill="#4f93c7" /></span>
        <button className="w-[27px]">3.500</button><span className="w-1" />
        <StatusToggle label="Units" d="M1 1h5v4H1zM4 7h7M9 4v7M2 8l2 3 4-4" /><i className="mx-[2px] h-2 w-2 bg-[#1f58d6]" /><StatusToggle label="Isolate" d="M2 1h4v10H2zM7 5h4v6" /><StatusToggle label="Clean screen" d="M1 2h10v9H1z" /><Menu size={14} strokeWidth={3} />
      </div>
    </footer>
  );
}

export default function App() {
  return (
    <div className="flex min-h-screen flex-col bg-black py-[13px] font-[Roboto,'Liberation_Sans',sans-serif] leading-none">
      <div className="relative flex flex-1 flex-col border-t border-r-[3px] border-b-2 border-l-[3px] border-t-[#2f7893] border-r-[#0b45b5] border-b-[#2a86b6] border-l-[#1a5572] bg-[#212a35]">
        <TitleBar />
        <Ribbon />
        <div className="flex h-[21px] items-end border-b-2 border-[#3f4557] pl-3 text-[8px] text-[#c3c8d0]">
          <a href="#start" className="flex h-4 w-[82px] items-center bg-[#2d3545] pl-[9px] [clip-path:polygon(8px_0,100%_0,100%_100%,0_100%)]">Start</a>
          <a href="#drawing" className="flex h-4 w-[104px] items-center gap-[3px] bg-[#3f4557] pl-[8px] [clip-path:polygon(8px_0,93%_0,100%_100%,0_100%)]">01-LB4.2.14.15.16.17*<X size={7} strokeWidth={3} /></a>
          <button aria-label="New drawing" className="ml-1 flex h-[13px] w-[13px] items-center justify-center self-center rounded bg-[#2d3545]"><Plus size={8} strokeWidth={3} /></button>
        </div>
        <main className="flex flex-1">
          <Toolspace />
          <PlanView />
          <i className="w-[3px] shrink-0 bg-[#3f4557]" />
          <SectionView />
          <Palette />
        </main>
        <StatusBar />
        <Dialog />
        <CommandLine />
        <svg viewBox="0 0 76 68" className="absolute right-[3px] bottom-[3px] h-[68px] w-[76px]">
          <path d="M38 1l37 37-27 27H28L1 38z" fill="#0f5596" stroke="#7a9ab4" />
          <path d="M28 66V29h4v37M36 66V21h4v45M44 66V29h4v37" fill="#23384e" stroke="#9fb8cb" strokeWidth=".8" />
        </svg>
        <div aria-hidden="true" className="absolute -bottom-px -left-[3px] h-3 w-[25px] bg-[radial-gradient(ellipse_at_45%_70%,#f0d9b5_0_15%,#b8763f_35%,#2a1710_75%)]" />
      </div>
    </div>
  );
}
